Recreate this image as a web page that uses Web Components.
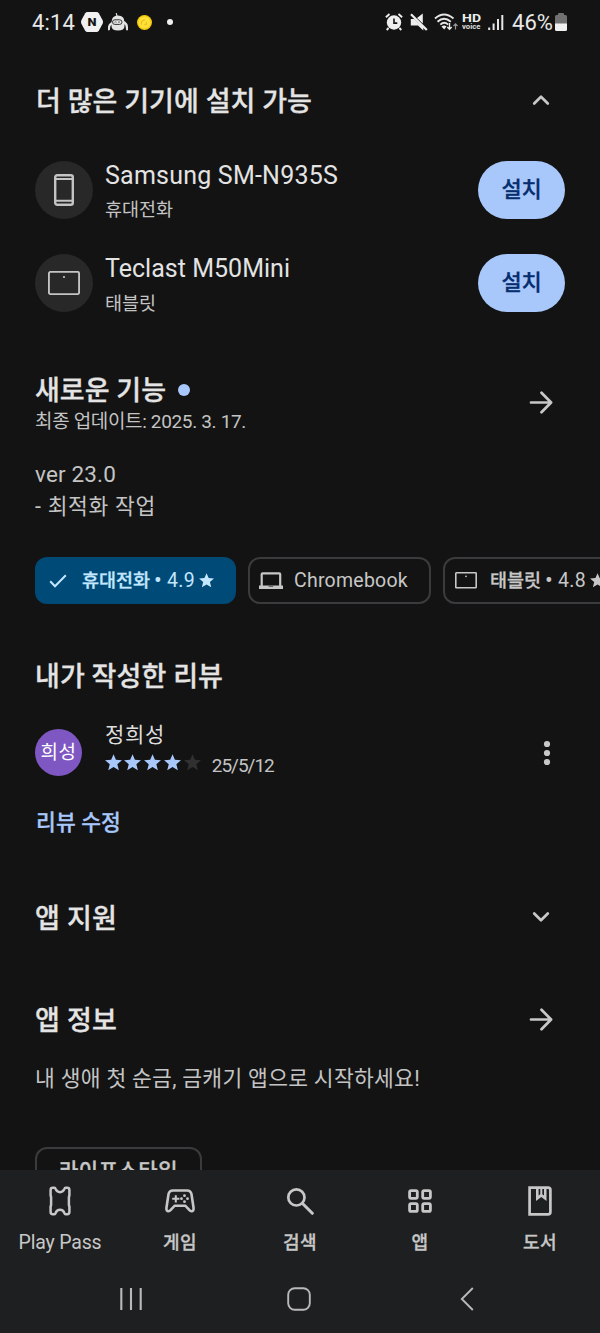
<!DOCTYPE html>
<html lang="ko">
<head>
<meta charset="utf-8">
<title>Play 스토어</title>
<style>
html,body{margin:0;background:#131313}
body{width:600px;height:1333px;overflow:hidden}
</style>
</head>
<body>
<store-screen></store-screen>
<script>
const G = 'Roboto,"Noto Sans CJK KR",sans-serif';
const star = '<path d="M9 .2l2.500 5.900 6.500.4-5 4.200 1.600 6.400L9 13.600l-5.600 3.500L5 10.700 0 6.500l6.500-.4z" fill="currentColor"/>';
const ICONS = {
  hex:[22,20,'<path d="M6.500 0h9q1.500 0 2.300 1.300l3.700 6.700q1 2 0 4l-3.700 6.700q-.8 1.300-2.300 1.300h-9q-1.500 0-2.300-1.300L.5 12q-1-2 0-4l3.700-6.700Q5 0 6.500 0z" fill="#f1f1f1"/><text x="11" y="13.800" text-anchor="middle" textLength="9" lengthAdjust="spacingAndGlyphs" font-family="Roboto" font-weight="900" font-size="11" fill="#151515">N</text>'],
  robot:[20,18,'<path d="M8.300.2l.6 3" stroke="#ddd" stroke-width="1.200"/><path d="M3.500 9.500q0-7 6.500-7t6.500 7v3.500q0 4.500-6.500 4.500t-6.500-4.500z" fill="#e4e4e4"/><path d="M3.500 10.500Q.6 12 .9 16.300M16.500 9.500q2.800 2 2.500 6.800" stroke="#e4e4e4" stroke-width="2.200" fill="none" stroke-linecap="round"/><rect x="4.500" y="6.800" width="9.500" height="4.600" rx="2.300" fill="#e6e6e6" stroke="#333" stroke-width="1"/><path d="M6.500 9.300q1-1 2 0M10 9.300q1-1 2 0" stroke="#444" fill="none" stroke-width=".8"/>'],
  coin:[15,15,'<circle cx="7.500" cy="7.500" r="7.500" fill="#f2c80c"/><circle cx="7.500" cy="7.500" r="6" fill="#ffe137"/><path d="M4.300 9.500Q4 5.500 8 4.800M9.200 7l.3 2.200-2 .8" stroke="#eabb1d" stroke-width="1.100" fill="none"/>'],
  alarm:[18,18,'<circle cx="9" cy="9.500" r="7.200" fill="#eee"/><path d="M.9 4.200L4.500 1M17.100 4.200L13.500 1M3.600 15l-1.900 2M14.400 15l1.900 2" stroke="#eee" stroke-width="1.900"/><path d="M9 5.500v4.600h3.300" stroke="#141414" stroke-width="1.600" fill="none"/>'],
  mute:[18,18,'<path d="M.8 6h3.500l9 8.500v3L8 12.500H.8zM7 5L12.800.6v10z" fill="#eee"/><path d="M1 1.200L16.800 17" stroke="#eee" stroke-width="2.300"/>'],
  wifi:[24,18,'<g fill="none" stroke="#e6e6e6" stroke-width="1.900"><path d="M1 5.500Q10-2.500 19.500 5.500M3.500 8.700q6.500-6 13.300 0M6.300 11.600q4-3.600 7.800 0"/></g><path d="M10.200 16.500l-2.700-3q2.700-2 5 0z" fill="#eee"/><path d="M15.500 10v6.200m-2.200-2.200l2.200 2.300 2.200-2.300" stroke="#eee" stroke-width="1.400" fill="none"/><path d="M21.500 16.500v-5.700m-2 2.200l2-2.200 2 2.200" stroke="#999" stroke-width="1.200" fill="none"/>'],
  hd:[20,24,'<text x="0" y="12" textLength="19" lengthAdjust="spacingAndGlyphs" font-family="Roboto" font-weight="700" font-size="11.500" fill="#ededed">HD</text><text x="0" y="18.800" textLength="18.500" lengthAdjust="spacingAndGlyphs" font-family="Roboto" font-weight="700" font-size="7.500" fill="#dedede">voice</text>'],
  signal:[16,17,'<path d="M1.200 13.500v2.500M5.600 9.500V16M10 5v11M14.300 1v15" stroke="#e6e6e6" stroke-width="2"/>'],
  battery:[12,18,'<path d="M4 0h4q1 0 1 1v1h1.500Q12 2 12 3.500V11H0V3.500Q0 2 1.500 2H3V1q0-1 1-1z" fill="#717171"/><path d="M0 10.500h12v6q0 1.500-1.500 1.500h-9Q0 18 0 16.500z" fill="#f1f1f1"/>'],
  up:[18,12,'<path d="M2.200 9.500L9 2.700l6.800 6.800" fill="none" stroke="currentColor" stroke-width="2.700" stroke-linecap="round" stroke-linejoin="round"/>'],
  down:[18,12,'<path d="M2.200 2.500L9 9.300l6.800-6.800" fill="none" stroke="currentColor" stroke-width="2.700" stroke-linecap="round" stroke-linejoin="round"/>'],
  arrow:[24,24,'<path d="M2 11.500h19.500M12.500 1.800l9.600 9.700-9.600 9.700" fill="none" stroke="currentColor" stroke-width="2.700" stroke-linecap="round" stroke-linejoin="round"/>'],
  phone:[20,32,'<rect x="1.200" y="1.200" width="17.600" height="29.600" rx="2" fill="none" stroke="currentColor" stroke-width="2.400"/><path d="M1 5h18M1 26.700h18" stroke="currentColor" stroke-width="2.100"/>'],
  tablet:[32,24,'<rect x=".9" y=".9" width="30.200" height="22.200" rx="1.700" fill="none" stroke="currentColor" stroke-width="1.900"/><circle cx="16" cy="6" r="1.100" fill="currentColor"/>'],
  smalltablet:[22,17,'<rect x=".8" y=".8" width="20.400" height="15" rx=".6" fill="none" stroke="currentColor" stroke-width="1.600"/><circle cx="11" cy="4.300" r=".9" fill="currentColor"/>'],
  laptop:[24,18,'<path d="M2.700 14V2.200q0-.9.9-.9h16.700q.9 0 .9.900V14" fill="none" stroke="currentColor" stroke-width="2.200"/><path d="M0 13.500h24v3.500H0z" fill="currentColor"/><path d="M9.600 14.200h4.600" stroke="#555" stroke-width="1.300"/>'],
  check:[18,14,'<path d="M1.200 7.200l4.800 5L16.800 1.300" fill="none" stroke="currentColor" stroke-width="2"/>'],
  star:[18,18,star],
  dots:[8,26,'<g fill="currentColor"><circle cx="4" cy="4" r="3.100"/><circle cx="4" cy="13" r="3.100"/><circle cx="4" cy="22" r="3.100"/></g>'],
  pass:[22,30,'<path d="M3.800 1.700h1.600q.8 0 1.200 1.200Q7.800 6.200 11 6.200t4.400-3.300q.4-1.200 1.200-1.200h1.600q2.200 0 2.200 2.200v5.600l-.5 1.500v8l.5 1.500v5.600q0 2.200-2.200 2.200h-1.600q-.8 0-1.200-1.200-1.200-3.300-4.400-3.300t-4.400 3.300q-.4 1.200-1.200 1.200H3.800q-2.200 0-2.200-2.200v-5.600l.5-1.500v-8l-.5-1.500V3.900q0-2.200 2.200-2.200z" fill="none" stroke="currentColor" stroke-width="2.500" stroke-linejoin="round"/>'],
  pad:[30,24,'<path d="M8 1.500h14q3.800 0 4.500 3.700l2 13.300q.5 3.700-2.100 3.700-1 0-1.900-1l-4.200-4.500H9.700l-4.200 4.500q-.9 1-1.900 1-2.600 0-2.100-3.700l2-13.300Q4.200 1.500 8 1.500z" fill="none" stroke="currentColor" stroke-width="2.600"/><path d="M10.800 6.200v7.200M7.200 9.800h7.200" stroke="currentColor" stroke-width="2"/><g fill="currentColor"><circle cx="19.500" cy="6.700" r="1.400"/><circle cx="19.500" cy="12.700" r="1.400"/><circle cx="16.500" cy="9.700" r="1.400"/><circle cx="22.500" cy="9.700" r="1.400"/></g>'],
  search:[28,28,'<circle cx="10.400" cy="10.400" r="8.100" fill="none" stroke="currentColor" stroke-width="2.700"/><path d="M16.300 16.300l10 10" stroke="currentColor" stroke-width="3" stroke-linecap="round"/>'],
  apps:[24,24,'<g fill="none" stroke="currentColor" stroke-width="2.800"><rect x="1.600" y="1.600" width="7.700" height="7.700" rx="1.500"/><rect x="14.700" y="1.600" width="7.700" height="7.700" rx="1.500"/><rect x="1.600" y="14.700" width="7.700" height="7.700" rx="1.500"/><rect x="14.700" y="14.700" width="7.700" height="7.700" rx="1.500"/></g>'],
  book:[24,30,'<path d="M1.600 1.600H20q2.400 0 2.400 2.400v22q0 2.400-2.400 2.400H1.600z" fill="none" stroke="currentColor" stroke-width="2.700"/><path d="M8 2h10.500v13L13.300 11 8 15z" fill="currentColor"/><path d="M10.600 3h1.700v5.300l-1.700 1.300zM14.300 3H16v6.600l-1.700-1.300z" fill="#1e1f20"/>'],
  recents:[22,24,'<path d="M1.300 1v22M11 1v22M20.700 1v22" stroke="currentColor" stroke-width="2.100"/>'],
  home:[24,24,'<rect x="1.200" y="1.200" width="21.600" height="21.600" rx="6.500" fill="none" stroke="currentColor" stroke-width="1.900"/>'],
  back:[14,24,'<path d="M12.800 1L1.800 12l11 11" fill="none" stroke="currentColor" stroke-width="1.900"/>']
};

/* An icon from the table above, at its natural size. */
customElements.define('ui-icon', class extends HTMLElement{
  connectedCallback(){
    const [w,h,body]=ICONS[this.getAttribute('name')];
    const k=+(this.getAttribute('scale')||1);
    this.attachShadow({mode:'open'}).innerHTML=
      `<style>:host{display:block;flex:none;width:${w*k}px;height:${h*k}px}svg{display:block}</style><svg width="${w*k}" height="${h*k}" viewBox="0 0 ${w} ${h}">${body}</svg>`;
  }
});

/* One line of text; tracking is adjusted so that the line fills the width "w".
   "dy" nudges the baseline without changing the space the line takes. */
customElements.define('ui-text', class extends HTMLElement{
  connectedCallback(){
    const a=(n,d)=>this.getAttribute(n)||d;
    const w=+a('w','0'), dy=+a('dy','0'), bold=a('weight','400')==='500';
    const r=this.attachShadow({mode:'open'});
    r.innerHTML=`<style>:host{display:block;flex:none;${w?`width:${w}px;`:''}margin-top:${dy}px;margin-bottom:${-dy}px;font:${a('weight','400')} ${a('size','18')}px/${a('lh','30')}px ${G};white-space:pre;-webkit-text-stroke:${a('stroke',bold?'.3':'0')}px currentColor}span{display:inline-block;vertical-align:top}</style><span><slot></slot></span>`;
    const s=r.querySelector('span'), n=[...this.textContent].length;
    if(w&&n) s.style.letterSpacing=((w-s.getBoundingClientRect().width)/n).toFixed(3)+'px';
  }
});

const define=(tag,html)=>customElements.define(tag,class extends HTMLElement{
  connectedCallback(){
    const t=document.createElement('template');
    t.innerHTML=typeof html==='function'?html(this):html;
    this.attachShadow({mode:'open'}).append(t.content.cloneNode(true));
  }
});

define('status-bar',`<style>
:host{display:flex;height:44px;align-items:center;color:#e8e8e8;box-sizing:border-box;padding-left:32px}
.dot{width:6px;height:6px;border-radius:50%;background:#f0f0f0;margin-left:15px}
</style>
<ui-text size="22" w="43" lh="44" dy="1">4:14</ui-text>
<ui-icon name="hex" style="margin-left:6px"></ui-icon>
<ui-icon name="robot" style="margin-left:5px"></ui-icon>
<ui-icon name="coin" style="margin-left:9px"></ui-icon>
<div class="dot"></div>
<ui-icon name="alarm" style="margin-left:212px"></ui-icon>
<ui-icon name="mute" style="margin-left:7px"></ui-icon>
<ui-icon name="wifi" style="margin-left:6px"></ui-icon>
<ui-icon name="hd" style="margin-left:4px"></ui-icon>
<ui-icon name="signal" style="margin-left:6px"></ui-icon>
<ui-text size="22" w="41" lh="44" dy="1" style="margin-left:8px">46%</ui-text>
<ui-icon name="battery" style="margin-left:2px"></ui-icon>`);

define('section-head',`<style>
:host{display:flex;align-items:center;justify-content:space-between;color:#e4e4e4;padding:0 47px 0 35px}
::slotted(ui-icon){color:#c8c8c8}
</style><slot></slot>`);

define('install-button',`<style>
:host{display:flex;align-items:center;justify-content:center;width:87px;height:58px;border-radius:29px;background:#a8c7fa;color:#062e6f;flex:none}
</style><ui-text size="22" weight="500" w="40" lh="32">설치</ui-text>`);

define('device-row',e=>`<style>
:host{display:flex;align-items:center;height:93px;padding:0 35px;color:#e3e3e3}
.disc{width:58px;height:58px;border-radius:50%;background:#282828;color:#c4c4c4;display:flex;align-items:center;justify-content:center}
.copy{flex:1;padding-left:12px}
.kind{color:#c4c4c4}
</style>
<div class="disc"><ui-icon name="${e.getAttribute('icon')}"></ui-icon></div>
<div class="copy"><ui-text size="25" lh="36" dy="2" w="${e.getAttribute('nw')}">${e.getAttribute('name')}</ui-text>
<ui-text class="kind" size="18.500" lh="32" dy="2.500" w="${e.getAttribute('kw')}">${e.getAttribute('kind')}</ui-text></div>
<install-button></install-button>`);

define('filter-chip',`<style>
:host{display:flex;align-items:center;box-sizing:border-box;height:47px;border:2px solid #3a3b3c;border-radius:12px;color:#c7c7c7;flex:none}
:host([selected]){background:#004a77;border-color:#004a77;color:#c2e7ff}
</style><slot></slot>`);

define('star-rating',`<style>
:host{display:flex;gap:2.700px;color:#a8c7fa;margin-left:-.5px}
.off{color:#303030}
</style>${'<ui-icon name="star" scale=".95"></ui-icon>'.repeat(4)}<ui-icon name="star" scale=".95" class="off"></ui-icon>`);

define('my-review',`<style>
:host{display:flex;height:70px;padding:0 49px 0 35px;color:#dedede;align-items:center}
.avatar{width:47px;height:47px;border-radius:50%;background:#7e57c2;color:#fff;display:flex;align-items:center;justify-content:center}
.copy{flex:1;padding:0 0 7px 23px}
.line{display:flex;align-items:center;gap:11px;height:28px}
.date{color:#c4c4c4}
star-rating{margin-bottom:3px}
</style>
<div class="avatar"><ui-text size="19" w="36" lh="28" dy="1">희성</ui-text></div>
<div class="copy"><ui-text size="21" w="60" lh="32">정희성</ui-text>
<div class="line"><star-rating></star-rating><ui-text class="date" size="19" w="62" lh="26" dy="1.500">25/5/12</ui-text></div></div>
<ui-icon name="dots" style="color:#c8c8c8;padding-top:2px"></ui-icon>`);

define('tab-item',e=>`<style>
:host{display:flex;flex-direction:column;align-items:center;width:120px;color:#c7c7c7}
.i{height:62px;display:flex;align-items:center}
</style><div class="i"><ui-icon name="${e.getAttribute('icon')}"></ui-icon></div>
<ui-text size="${e.getAttribute('size')||18}" weight="${e.getAttribute('weight')||500}" w="${e.getAttribute('w')}" lh="20" dy="1">${e.getAttribute('label')}</ui-text>`);

define('bottom-bar',`<style>
:host{display:block;height:163px;flex:none;background:#1e1f20}
.tabs{display:flex;height:94px}
.sys{display:flex;height:69px;align-items:center;justify-content:center;color:#b9b9b9;padding-right:2px}
.sys div{width:168px;display:flex;justify-content:center}
</style>
<div class="tabs">
<tab-item icon="pass" label="Play Pass" w="83" size="19.500" weight="400"></tab-item>
<tab-item icon="pad" label="게임" w="34"></tab-item>
<tab-item icon="search" label="검색" w="34"></tab-item>
<tab-item icon="apps" label="앱" w="17"></tab-item>
<tab-item icon="book" label="도서" w="34"></tab-item>
</div>
<div class="sys"><div><ui-icon name="recents"></ui-icon></div><div><ui-icon name="home"></ui-icon></div><div><ui-icon name="back"></ui-icon></div></div>`);

define('store-screen',`<style>
:host{display:flex;flex-direction:column;width:600px;height:1333px;background:#131313;overflow:hidden}
main{flex:1;min-height:0;overflow:hidden}
.pad{padding-left:35px;color:#c4c4c4}
.new{display:flex;align-items:center;gap:12px}
.new i{width:12px;height:12px;border-radius:50%;background:#a8c7fa;margin-top:1px}
.sub{color:#c4c4c4}
.chips{display:flex;gap:12px;margin-top:35px;padding-left:35px;overflow:hidden}
.link{color:#a8c7fa;padding:21px 0 0 36px}
</style>
<status-bar></status-bar>
<main>
<section-head style="height:86px;padding:13px 50px 0 36px"><ui-text size="27" weight="500" w="276" lh="40" dy="2">더 많은 기기에 설치 가능</ui-text><ui-icon name="up"></ui-icon></section-head>
<device-row icon="phone" name="Samsung SM-N935S" nw="233" kind="휴대전화" kw="68"></device-row>
<device-row icon="tablet" name="Teclast M50Mini" nw="185" kind="태블릿" kw="51" style="height:94px"></device-row>
<section-head style="margin-top:41px">
<div><div class="new"><ui-text size="27" weight="500" w="131" lh="36" dy="2">새로운 기능</ui-text><i></i></div>
<ui-text class="sub" size="19" w="211" lh="28" dy="1">최종 업데이트: 2025. 3. 17.</ui-text></div>
<ui-icon name="arrow"></ui-icon></section-head>
<div class="pad" style="padding-top:23px"><ui-text size="22.500" w="81" lh="32">ver 23.0</ui-text><ui-text size="21.500" w="121" lh="32" dy="1">- 최적화 작업</ui-text></div>
<div class="chips">
<filter-chip selected style="width:201px"><ui-icon name="check" style="margin-left:12px"></ui-icon><ui-text size="18.500" weight="500" w="68" lh="30" dy=".5" style="margin-left:15px">휴대전화</ui-text><ui-text size="23" w="9" lh="30" style="margin-left:4px">•</ui-text><ui-text size="19.500" w="28" lh="30" dy=".5" style="margin-left:4px">4.9</ui-text><ui-icon name="star" scale=".84" style="margin-left:4px"></ui-icon></filter-chip>
<filter-chip style="width:183px"><ui-icon name="laptop" style="margin-left:9px"></ui-icon><ui-text size="19.500" w="114" lh="30" dy=".5" style="margin-left:11px">Chromebook</ui-text></filter-chip>
<filter-chip style="width:201px"><ui-icon name="smalltablet" style="margin-left:10px"></ui-icon><ui-text size="18.500" weight="500" w="51" lh="30" dy=".5" style="margin-left:13px">태블릿</ui-text><ui-text size="23" w="9" lh="30" style="margin-left:4px">•</ui-text><ui-text size="19.500" w="28" lh="30" dy=".5" style="margin-left:4px">4.8</ui-text><ui-icon name="star" scale=".84" style="margin-left:4px"></ui-icon></filter-chip>
</div>
<section-head style="margin-top:53px"><ui-text size="27" weight="500" w="188" lh="36" dy="2">내가 작성한 리뷰</ui-text></section-head>
<my-review style="margin-top:24px"></my-review>
<div class="link"><ui-text size="21.500" weight="500" w="85" lh="30">리뷰 수정</ui-text></div>
<section-head style="margin-top:61px;padding-right:50px"><ui-text size="27" weight="500" w="82" lh="36" dy="1.500">앱 지원</ui-text><ui-icon name="down"></ui-icon></section-head>
<section-head style="margin-top:67px"><ui-text size="27" weight="500" w="82" lh="36" dy="1">앱 정보</ui-text><ui-icon name="arrow"></ui-icon></section-head>
<div class="pad" style="padding-top:24px"><ui-text size="21.500" w="385" lh="32" dy="1">내 생애 첫 순금, 금캐기 앱으로 시작하세요!</ui-text></div>
<div class="chips" style="margin-top:53px"><filter-chip style="width:167px;justify-content:center"><ui-text size="21" weight="500" w="119" lh="32">라이프스타일</ui-text></filter-chip></div>
</main>
<bottom-bar></bottom-bar>`);
</script>
</body>
</html>
